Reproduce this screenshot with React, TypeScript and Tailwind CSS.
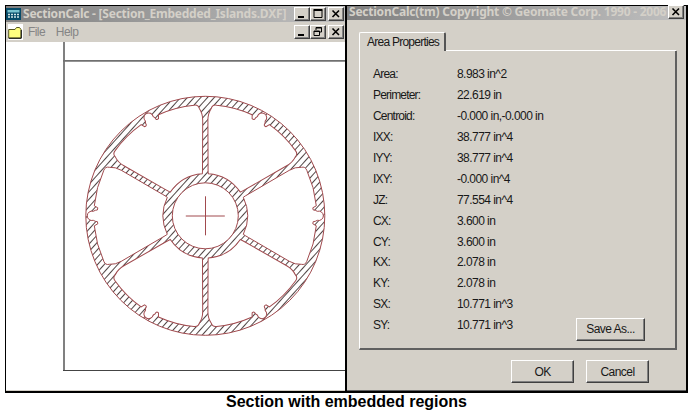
import { FunctionComponent, ReactNode } from "react";

const POCKET =
  "M38 -18.5 Q40 -20 43 -21.6 L84 -45.5 Q90 -49 96 -48.5 Q100 -49.5 101.5 -45.5 A111.5 111.5 0 0 1 111 -10 L107.5 -8 Q107 -5 110 -5.5 L112 -4.5 A4.7 4.7 0 1 1 112 4.5 L110 5.5 Q107 5 107.5 8 L111 10 A111.5 111.5 0 0 1 101.5 45.5 Q100 49.5 96 48.5 Q90 49 84 45.5 L43 21.6 Q40 20 38 18.5 A42.5 42.5 0 0 0 38 -18.5 Z";

const ANGLES = [0, 60, 120, 180, 240, 300];

const properties = [
  ["Area:", "8.983 in^2"],
  ["Perimeter:", "22.619 in"],
  ["Centroid:", "-0.000 in,-0.000 in"],
  ["IXX:", "38.777 in^4"],
  ["IYY:", "38.777 in^4"],
  ["IXY:", "-0.000 in^4"],
  ["JZ:", "77.554 in^4"],
  ["CX:", "3.600 in"],
  ["CY:", "3.600 in"],
  ["KX:", "2.078 in"],
  ["KY:", "2.078 in"],
  ["SX:", "10.771 in^3"],
  ["SY:", "10.771 in^3"],
];

const CaptionButton: FunctionComponent<{ children: ReactNode }> = ({
  children,
}) => (
  <button className="h-[14px] w-4 shrink-0 border border-t-white border-l-white border-r-[#404040] border-b-[#404040] bg-[#d4d0c8] shadow-[inset_-1px_-1px_0_#808080]">
    <svg viewBox="0 0 14 12" className="block h-3 w-3.5">
      {children}
    </svg>
  </button>
);

const Minimize = () => (
  <CaptionButton>
    <path d="M3 9h6" stroke="#000" strokeWidth="2" />
  </CaptionButton>
);

const Close = () => (
  <CaptionButton>
    <path d="M3.5 2.5l6.5 6.5M10 2.5l-6.5 6.5" stroke="#000" strokeWidth="1.6" />
  </CaptionButton>
);

const DialogButton: FunctionComponent<{ label: string; className: string }> = ({
  label,
  className,
}) => (
  <button
    className={`border border-t-white border-l-white border-r-[#404040] border-b-[#404040] bg-[#d4d0c8] text-center shadow-[inset_-1px_-1px_0_#808080] ${className}`}
  >
    {label}
  </button>
);

const SectionDrawing = () => (
  <svg viewBox="6 42 339 348" className="block h-[348px] w-[339px]" fill="none">
    <defs>
      <pattern
        id="hatch"
        width="5"
        height="5"
        patternUnits="userSpaceOnUse"
        patternTransform="rotate(-48)"
      >
        <path d="M0 2.5h5" stroke="#3c3030" strokeWidth="0.9" />
      </pattern>
      <mask id="solid" maskUnits="userSpaceOnUse" x="-122" y="-122" width="244" height="244">
        <circle r="119.5" fill="#fff" />
        <circle r="33" fill="#000" />
        {ANGLES.map((a) => (
          <path key={a} d={POCKET} transform={`rotate(${a})`} fill="#000" />
        ))}
      </mask>
    </defs>
    <path d="M64 42V370" stroke="#808080" strokeWidth="2" />
    <path d="M63 60.9H345" stroke="#707070" strokeWidth="1.6" />
    <path d="M63 370.5H345" stroke="#444" />
    <g transform="translate(205.3 215.8)">
      <rect x="-122" y="-122" width="244" height="244" fill="url(#hatch)" mask="url(#solid)" />
      <g stroke="#a14a4e">
        <circle r="119.5" />
        <circle r="33" />
        {ANGLES.map((a) => (
          <path key={a} d={POCKET} transform={`rotate(${a})`} />
        ))}
        <path d="M-19.5 .2H19.5M.2 -19.5V19.5" />
      </g>
    </g>
  </svg>
);

const MainWindow = () => (
  <div className="flex w-[339px] flex-col bg-white">
    <div className="flex h-4 items-center bg-linear-to-r from-[#808080] to-[#c0c0c0] pr-px">
      <svg viewBox="0 0 15 12" className="h-3 w-[15px] shrink-0">
        <path d="M0 0h15v12H0z" fill="#064b68" />
        <path d="M1.5 2h12v2.5h-12z" fill="#78c3cf" />
        <path d="M2 6.5h11M2 9h11" stroke="#d4e8e8" strokeWidth="1.4" strokeDasharray="2 1" />
      </svg>
      <span className="ml-0.5 w-[272px] font-['Noto_Sans','Open_Sans',sans-serif] text-xs leading-4 font-bold tracking-[-0.23px] whitespace-nowrap text-[#d4d0c8]">
        SectionCalc - [Section_Embedded_Islands.DXF]
      </span>
      <Minimize />
      <CaptionButton>
        <path d="M3 2.5h8v7h-8z" stroke="#000" fill="none" />
        <path d="M2.5 2h9" stroke="#000" strokeWidth="2" />
      </CaptionButton>
      <div className="w-0.5" />
      <Close />
    </div>
    <div className="flex h-5 items-center bg-[#d4d0c8] pr-px text-[#858585]">
      <div className="ml-0.5 flex h-4 w-[15px] items-center justify-center bg-white">
        <svg viewBox="0 0 14 13" className="h-[13px] w-3.5">
          <path d="M.7 3.5H7L8.5 1.5H11.5L13 3.5V12H.7Z" fill="#ffff80" stroke="#555520" />
          <path d="M.7 12.3H13.3V4" stroke="#111" fill="none" />
        </svg>
      </div>
      <span className="ml-[5px] w-7">File</span>
      <span className="w-[239px]">Help</span>
      <Minimize />
      <CaptionButton>
        <path d="M5 4V1.5h5.5V6H8.5M5 2h5.5" stroke="#000" fill="none" />
        <path d="M3 5h5.5v4.5H3zM3 5.5h5.5" stroke="#000" fill="none" />
      </CaptionButton>
      <div className="w-0.5" />
      <Close />
    </div>
    <SectionDrawing />
    <div className="h-px bg-[#d4d0c8]" />
  </div>
);

const ResultsDialog = () => (
  <div className="flex w-[339px] flex-col border-b border-[#606060] bg-[#d4d0c8]">
    <div className="flex h-[14px] items-start bg-linear-to-r from-[#808080] to-[#c0c0c0] font-['Noto_Sans','Open_Sans',sans-serif] text-xs leading-[11px] font-bold tracking-[-0.23px] whitespace-nowrap text-[#d4d0c8]">
      <span className="ml-0.5 w-[319px]">
        SectionCalc(tm) Copyright © Geomate Corp. 1990 - 2006
      </span>
      <div className="-mt-px">
        <Close />
      </div>
    </div>
    <div className="mt-3 ml-3 flex h-[19px]">
      <div className="w-[87px] rounded-t-xs border-t border-r-2 border-l border-t-white border-r-[#555] border-l-white pl-[7px] leading-[19px] tracking-[-0.75px] whitespace-nowrap">
        Area Properties
      </div>
      <div className="mr-2.5 grow border-b border-white" />
    </div>
    <div className="mr-[9px] ml-3 h-[299px] border-r-2 border-b-2 border-l border-r-[#606060] border-b-[#606060] border-l-white pt-[13px] pl-[13px]">
      <div className="flex">
        <div className="grid w-[202px] auto-rows-[20.9px] grid-cols-[84px_1fr] items-center leading-4 text-[#181818]">
          {properties.map(([name, value]) => (
            <div key={name} className="contents">
              <span className="tracking-[-0.8px]">{name}</span>
              <span>{value}</span>
            </div>
          ))}
        </div>
        <DialogButton label="Save As..." className="mt-auto -mb-[5px] ml-px h-[23px] w-[69px]" />
      </div>
    </div>
    <div className="mt-[10px] ml-[164px] flex gap-3">
      <DialogButton label="OK" className="h-[23px] w-[63px]" />
      <DialogButton label="Cancel" className="h-[23px] w-[63px]" />
    </div>
  </div>
);

const App: FunctionComponent = () => {
  return (
    <div className="h-[417px] w-[691px] overflow-hidden bg-white pt-[5px] pl-[5px] font-['Liberation_Sans',Arial,sans-serif] text-xs tracking-[-0.55px] text-[#181818]">
      <div className="flex h-[388px] w-[683px] gap-0.5 border border-b-2 border-black bg-black">
        <MainWindow />
        <ResultsDialog />
      </div>
      <div className="w-[683px] text-center text-base leading-[18px] font-bold tracking-normal text-black">
        Section with embedded regions
      </div>
    </div>
  );
};

export default App;
